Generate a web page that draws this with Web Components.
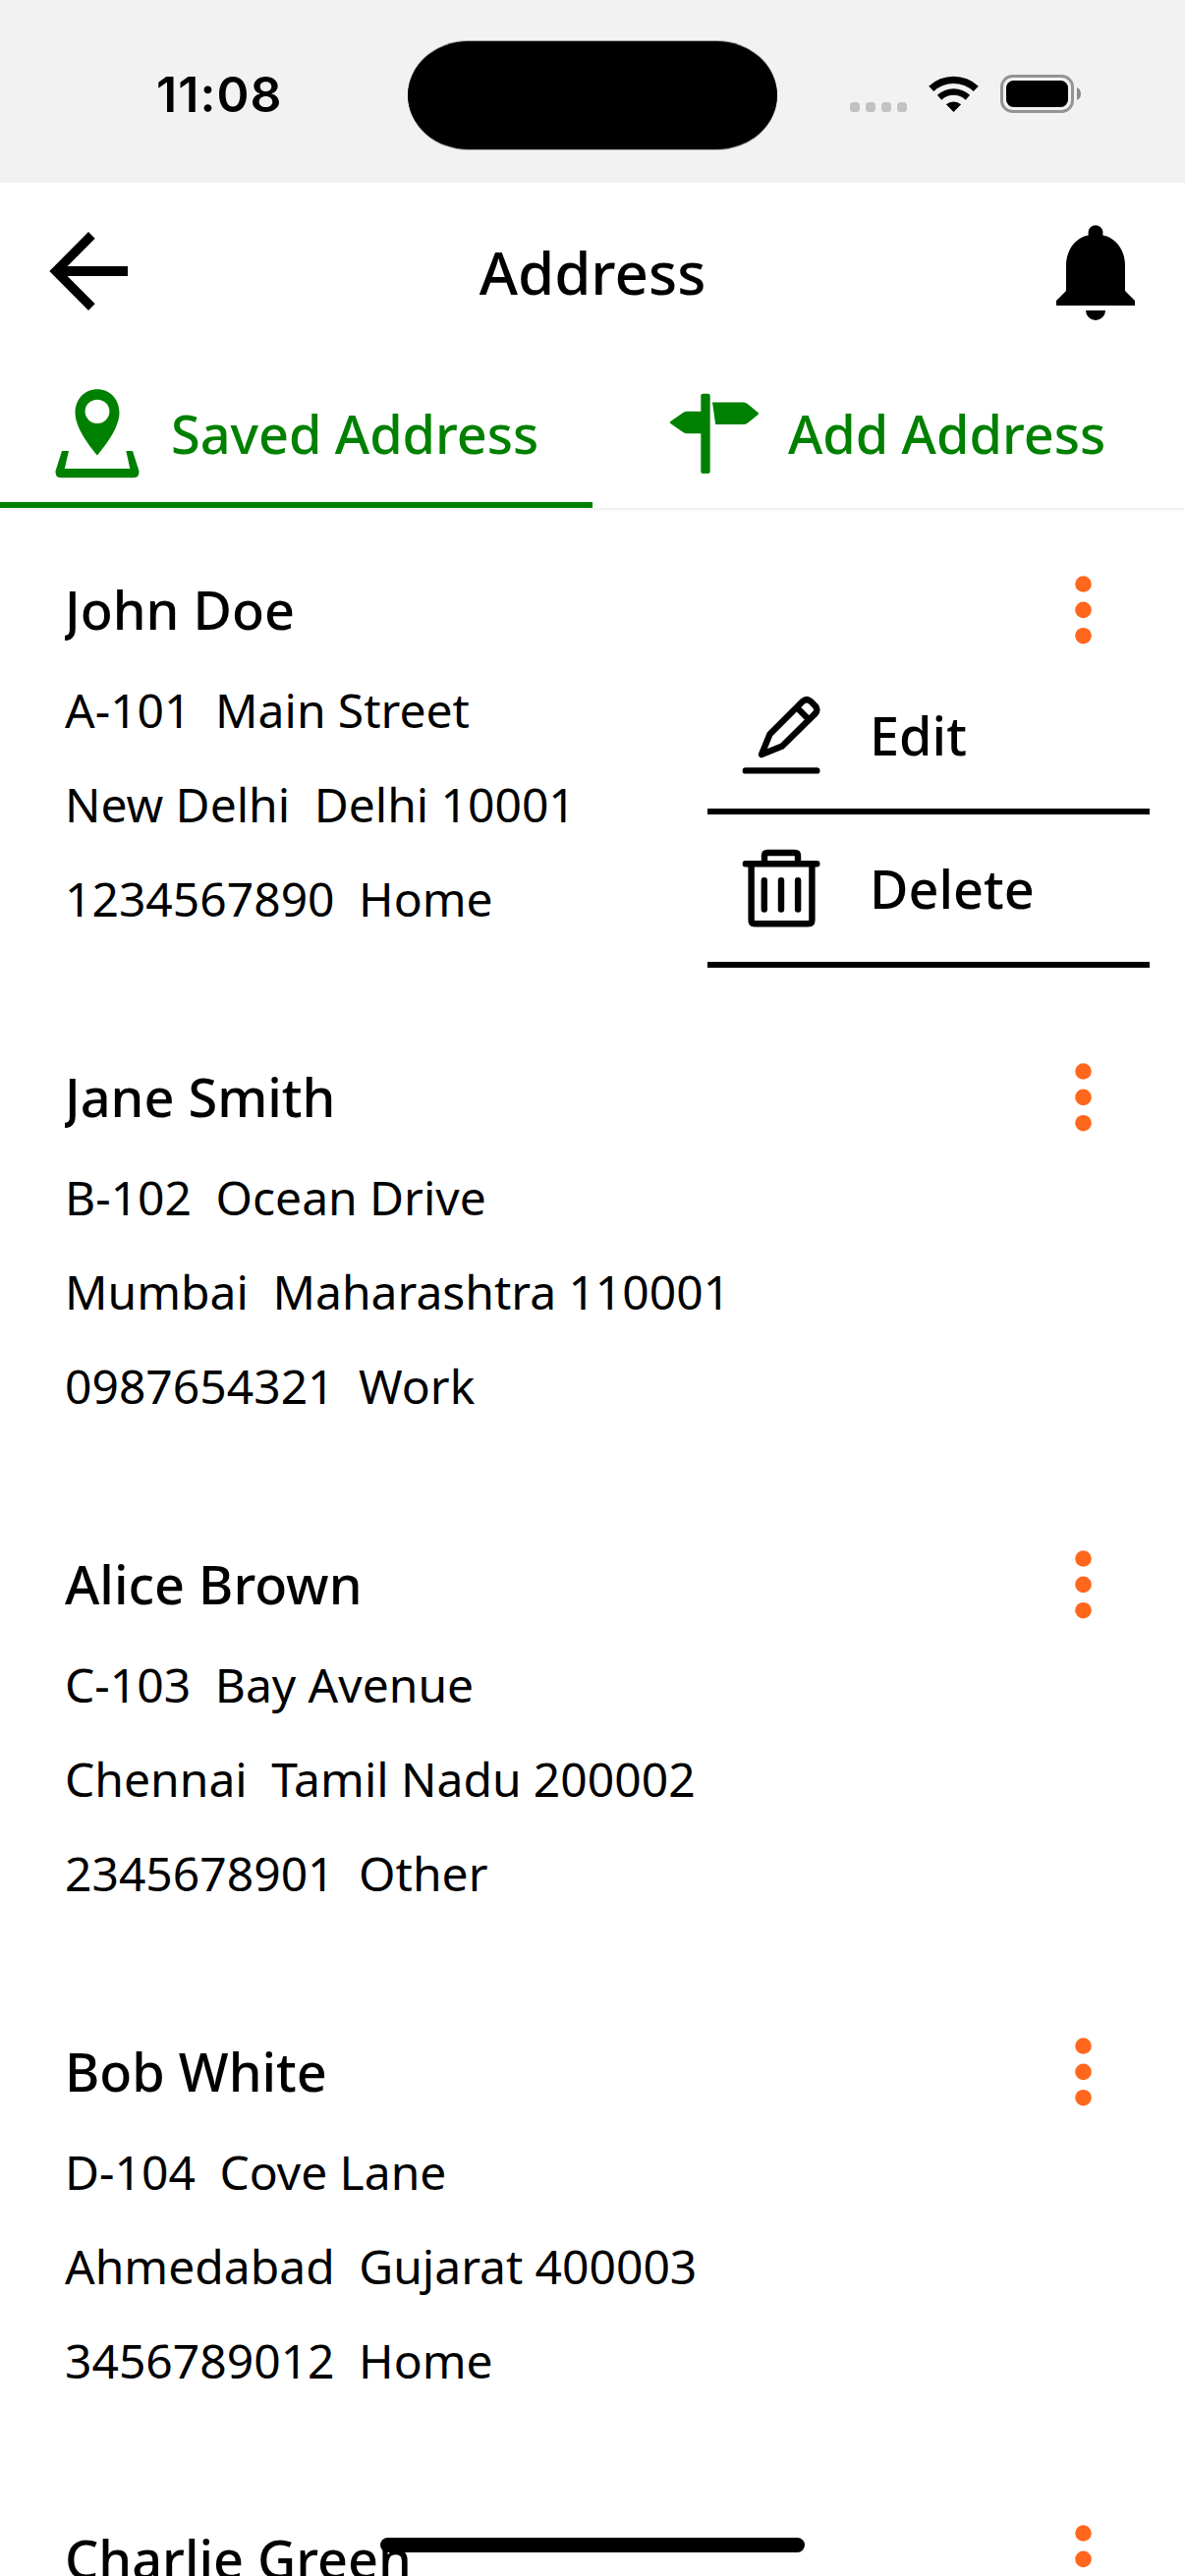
<!DOCTYPE html>
<html lang="en">
<head>
<meta charset="utf-8">
<title>Address</title>
<style>
  html, body { margin: 0; background: #fff; }
  body { width: 1206px; height: 2622px; overflow: hidden; font-family: "Noto Sans", sans-serif; color: #000; }
</style>
</head>
<body>
<address-app></address-app>

<template id="t-status">
  <style>
    :host { display: grid; grid-template-columns: 415px 376px 415px; height: 186px; background: #f2f2f2; box-sizing: border-box; padding-top: 42px; align-items: start; }
    .time { font: 600 50px/60px Inter, sans-serif; letter-spacing: 1.1px; padding: 24px 0 0 159px; }
    .island { height: 110px; border-radius: 62px / 55px; background: #000; box-shadow: 0 1px 0 rgba(0,0,0,.3), 0 -1px 0 rgba(0,0,0,.3); }
    .icons { display: flex; padding: 34px 0 0 74px; }
    svg { display: block; }
    .cell { margin: 28px 22px 0 0; }
    .wifi { margin: 1px 22px 0 0; }
  </style>
  <div class="time">11:08</div>
  <div class="island"></div>
  <div class="icons">
    <svg class="cell" width="58" height="10" fill="#c2c2c2"><rect width="10" height="10" rx="3.5"/><rect x="16" width="10" height="10" rx="3.5"/><rect x="32" width="10" height="10" rx="3.5"/><rect x="48" width="10" height="10" rx="3.5"/></svg>
    <svg class="wifi" width="51" height="37" viewBox="-25.5 -37 51 37"><path d="M-25.3-26.2A36.8 36.8 0 0 1 25.3-26.2L20.2-21A29.3 29.3 0 0 0-20.2-21ZM-16.6-17.3A24.5 24.5 0 0 1 16.6-17.3L12.2-12.2A17.3 17.3 0 0 0-12.2-12.2ZM-7.6-7.7A11.6 11.6 0 0 1 7.6-7.7L0 0Z"/></svg>
    <svg width="83" height="39"><rect x="1.5" y="1.5" width="72" height="36" rx="11" fill="none" stroke="#949494" stroke-width="3"/><rect x="6" y="6" width="63" height="27" rx="7.5"/><path d="M78 13Q82 15 82 19.5T78 26Z" fill="#8a8a8a"/></svg>
  </div>
</template>

<template id="t-header">
  <style>
    :host { display: flex; justify-content: space-between; align-items: flex-start; height: 180px; box-sizing: border-box; padding: 42px 50px 0; }
    h1 { margin: 8px 0 0; font-weight: 500; font-size: 60px; line-height: 82px; }
    svg { display: block; }
  </style>
  <svg width="82" height="96" viewBox="50 228 82 96"><path d="M50.3 276 90 236l6.7 6.8L68.6 271H130v10H68.6l28.1 28.2L90 316Z"/></svg>
  <h1><slot></slot></h1>
  <svg width="82" height="98" viewBox="1074 228 82 98"><path d="M1085 296V270C1085 255 1094 242 1107.6 239.5V235.5A7.5 7.5 0 0 1 1122.4 235.5V239.5C1136 242 1145 255 1145 270V296L1155 306V311H1075V306ZM1105 316H1125A10 10 0 0 1 1105 316Z"/></svg>
</template>

<template id="t-tab">
  <style>
    :host { display: flex; width: 603px; height: 151px; box-sizing: border-box; align-items: flex-start; border-bottom: 6px solid transparent; color: #008000; font-weight: 500; font-size: 54px; line-height: 74px; word-spacing: -0.8px; padding: 24px 0 0 var(--inset); gap: var(--gap); }
    :host([active]) { border-bottom-color: #008000; }
    .label { margin-top: 14px; white-space: nowrap; }
  </style>
  <slot name="icon"></slot><div class="label"><slot></slot></div>
</template>

<template id="t-menu">
  <style>
    :host { display: block; width: 450px; background: #fff; font-weight: 500; font-size: 54px; line-height: 74px; }
    .row { display: flex; align-items: center; height: 150px; border-bottom: 6px solid #000; padding-left: 34px; gap: 49px; }
    svg { display: block; fill: none; stroke: #000; stroke-width: 6.4; stroke-linecap: round; stroke-linejoin: round; }
  </style>
  <div class="row">
    <svg width="82" height="82" viewBox="754 707 82 82"><path d="M758.8 784.4H831.3M775 768 783.5 747.3 817 713.8Q821 710.3 825 713.8L829.6 718.4Q833 722.4 829.6 726.4L796 759.5ZM812.3 721.5 822 731.2"/></svg>
    <span>Edit</span>
  </div>
  <div class="row">
    <svg width="82" height="82" viewBox="754 863 82 82"><path d="M758.8 879.3H831.3M778 879V871Q778 868 781 868H809Q812 868 812 871V879M764.6 880V936.5Q764.6 940.3 768.4 940.3H822.6Q826.4 940.3 826.4 936.5V880M777.8 896.2V925.5M795 896.2V925.5M812.1 896.2V925.5"/></svg>
    <span>Delete</span>
  </div>
</template>

<template id="t-card">
  <style>
    :host { display: block; position: relative; height: 380px; padding-left: 66px; }
    .top { display: flex; justify-content: space-between; height: 92px; padding-right: 94px; }
    h2 { margin: 0; height: 74px; font-weight: 500; font-size: 54px; line-height: 74px; overflow: hidden; }
    .line { font-size: 48px; line-height: 96px; height: 96px; white-space: pre; word-spacing: -0.2px; }
    svg { display: block; margin-top: 2px; }
    ::slotted(action-menu) { position: absolute; top: 90px; right: 36px; }
  </style>
  <div class="top"><h2></h2><svg width="19" height="72" viewBox="0 0 19 72" fill="#ff671d"><circle cx="9.5" cy="9.5" r="8.3"/><circle cx="9.5" cy="35.9" r="8.3"/><circle cx="9.5" cy="62.2" r="8.3"/></svg></div>
  <div class="line street"></div>
  <div class="line city"></div>
  <div class="line contact"></div>
  <slot></slot>
</template>

<template id="t-app">
  <style>
    :host { display: flex; flex-direction: column; position: relative; width: 1206px; height: 2622px; overflow: hidden; background: #fff; }
    .tabs { display: flex; height: 151px; flex: none; box-shadow: 0 1px 4px rgba(0,0,0,.1); clip-path: inset(0 0 -10px 0); }
    status-bar, page-header { flex: none; }
    tab-item svg { display: block; fill: #008000; }
    .list { display: flex; flex-direction: column; gap: 116px; padding-top: 66px; }
    .home { position: absolute; left: 387px; top: 2583px; width: 432px; height: 15px; border-radius: 7.5px; background: #000; }
  </style>
  <status-bar></status-bar>
  <page-header>Address</page-header>
  <div class="tabs">
    <tab-item active style="--inset:54px;--gap:30px">
      <svg slot="icon" width="90" height="100" viewBox="54 390 90 100"><path fill-rule="evenodd" d="M99 396.2C86 396.2 76.5 406.5 76.5 420 76.5 434 89 452 99 463.4 109 452 121.5 434 121.5 420 121.5 406.5 112 396.2 99 396.2ZM99 406.7A12.4 12.1 0 1 1 99 431 12.4 12.1 0 1 1 99 406.7Z"/><path d="M63 459H70L65.8 477H132.3L128.3 459H135L141.5 479.5Q142 486.3 136 486.3H62Q56 486.3 56.5 479.5Z"/></svg>
      Saved Address
    </tab-item>
    <tab-item style="--inset:75px;--gap:26px">
      <svg slot="icon" width="98" height="100" viewBox="678 390 98 100"><rect x="713.3" y="400.7" width="9.4" height="81.3" rx="2"/><path d="M714 418.7H699Q696.5 418.7 694.5 420.5L682.3 429Q681.3 430 682.3 431L694.5 439.5Q696.5 441.2 699 441.2H714ZM725 409.6H756.5Q759 409.6 761 411.2L771.5 419.9Q772.5 420.9 771.5 421.9L761 430.6Q759 432.1 756.5 432.1H728.2Z"/></svg>
      Add Address
    </tab-item>
  </div>
  <div class="list">
    <address-card name="John Doe" street="A-101  Main Street" city="New Delhi  Delhi 10001" contact="1234567890  Home"><action-menu></action-menu></address-card>
    <address-card name="Jane Smith" street="B-102  Ocean Drive" city="Mumbai  Maharashtra 110001" contact="0987654321  Work"></address-card>
    <address-card name="Alice Brown" street="C-103  Bay Avenue" city="Chennai  Tamil Nadu 200002" contact="2345678901  Other"></address-card>
    <address-card name="Bob White" street="D-104  Cove Lane" city="Ahmedabad  Gujarat 400003" contact="3456789012  Home"></address-card>
    <address-card name="Charlie Green"></address-card>
  </div>
  <div class="home"></div>
</template>

<script>
  function define(tag, id, setup) {
    customElements.define(tag, class extends HTMLElement {
      constructor() {
        super();
        this.attachShadow({ mode: 'open' }).append(document.getElementById(id).content.cloneNode(true));
      }
      connectedCallback() { if (setup) setup(this, this.shadowRoot); }
    });
  }
  define('status-bar', 't-status');
  define('page-header', 't-header');
  define('tab-item', 't-tab');
  define('action-menu', 't-menu');
  define('address-card', 't-card', (el, root) => {
    root.querySelector('h2').textContent = el.getAttribute('name');
    for (const key of ['street', 'city', 'contact']) {
      root.querySelector('.' + key).textContent = el.getAttribute(key) || '';
    }
  });
  define('address-app', 't-app');
</script>
</body>
</html>
